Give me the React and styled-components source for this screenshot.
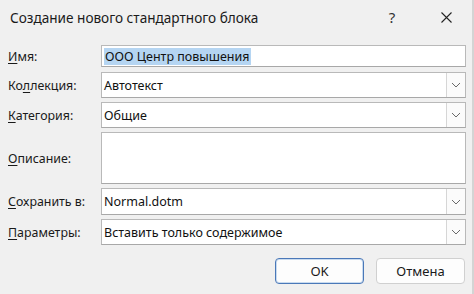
import styled, { createGlobalStyle } from "styled-components";

const GlobalStyle = createGlobalStyle`
  html, body {
    margin: 0;
    padding: 0;
    background: #f0f0f0;
  }
  body {
    font-family: "Noto Sans", "Open Sans", sans-serif;
    color: #1a1a1a;
  }
`;

const Dialog = styled.div`
  width: 472px;
  height: 294px;
  background: #f0f0f0;
  border-right: 2px solid #d4d4d4;
  display: flex;
  flex-direction: column;
  overflow: hidden;
`;

const TitleBar = styled.div`
  height: 34px;
  display: flex;
  align-items: center;
  padding-left: 10px;
  padding-right: 3px;
`;

const Title = styled.div`
  flex: 1;
  font-size: 13.6px;
  color: #1a1a1a;
  white-space: nowrap;
`;

const TitleButton = styled.div`
  width: 46px;
  height: 34px;
  margin-right: ${(p) => p.$mr || 0}px;
  display: flex;
  align-items: center;
  justify-content: center;
  font-size: 15px;
  color: #333;
`;

const Form = styled.div`
  margin-top: 11px;
  padding: 0 6px 0 8px;
  display: flex;
  flex-direction: column;
  gap: 4px;
`;

const Row = styled.div`
  display: grid;
  grid-template-columns: 93px 1fr;
  align-items: center;
  height: ${(p) => p.$h}px;
  margin-top: ${(p) => p.$mt || 0}px;
`;

const Label = styled.div`
  font-size: 12.4px;
  color: #1a1a1a;
  white-space: nowrap;
`;

const Key = styled.span`
  text-decoration: underline;
  text-underline-offset: 2px;
`;

const Field = styled.div`
  height: 100%;
  box-sizing: border-box;
  background: #fff;
  border: 1px solid #b9b9b9;
  border-bottom-color: #a8a8a8;
  display: flex;
  align-items: center;
  font-size: 12.5px;
  color: #111;
`;

const FieldText = styled.div`
  flex: 1;
  padding-left: 2px;
  white-space: nowrap;
  overflow: hidden;
`;

const Selected = styled.span`
  background: #b5d5f2;
  padding: 2px 1px 3px 1px;
`;

const DropButton = styled.div`
  width: 19px;
  height: 100%;
  box-sizing: border-box;
  border-left: 1px solid #d6d6d6;
  background: #fbfbfb;
  display: flex;
  align-items: center;
  justify-content: center;
`;

const Buttons = styled.div`
  display: flex;
  justify-content: flex-end;
  gap: 12px;
  padding: 13px 7px 0 0;
`;

const Button = styled.div`
  width: 89px;
  height: 26px;
  box-sizing: border-box;
  background: #fdfdfd;
  border: 1px solid ${(p) => (p.$primary ? "#4a78b8" : "#d0d0d0")};
  box-shadow: ${(p) => (p.$primary ? "inset 0 0 0 1px #c9dbef" : "none")};
  border-radius: 4px;
  display: flex;
  align-items: center;
  justify-content: center;
  font-size: 13px;
  color: #1a1a1a;
`;

const Chevron = () => (
  <svg width="10" height="6" viewBox="0 0 10 6">
    <polyline points="1,1 5,5 9,1" fill="none" stroke="#6a6a6a" strokeWidth="1" />
  </svg>
);

const CloseIcon = () => (
  <svg width="11" height="11" viewBox="0 0 11 11">
    <path d="M0.5 0.5 L10.5 10.5 M10.5 0.5 L0.5 10.5" stroke="#222" strokeWidth="1.1" />
  </svg>
);

const Select = ({ children }) => (
  <Field>
    <FieldText>{children}</FieldText>
    <DropButton>
      <Chevron />
    </DropButton>
  </Field>
);

export default function App() {
  return (
    <>
      <GlobalStyle />
      <Dialog>
        <TitleBar>
          <Title>Создание нового стандартного блока</Title>
          <TitleButton $mr={8}>?</TitleButton>
          <TitleButton>
            <CloseIcon />
          </TitleButton>
        </TitleBar>
        <Form>
          <Row $h={22}>
            <Label>
              <Key>И</Key>мя:
            </Label>
            <Field>
              <FieldText>
                <Selected>ООО Центр повышения</Selected>
              </FieldText>
            </Field>
          </Row>
          <Row $h={26} $mt={1}>
            <Label>
              Ко<Key>л</Key>лекция:
            </Label>
            <Select>Автотекст</Select>
          </Row>
          <Row $h={26}>
            <Label>
              <Key>К</Key>атегория:
            </Label>
            <Select>Общие</Select>
          </Row>
          <Row $h={52}>
            <Label>
              <Key>О</Key>писание:
            </Label>
            <Field />
          </Row>
          <Row $h={27}>
            <Label>
              <Key>С</Key>охранить в:
            </Label>
            <Select>Normal.dotm</Select>
          </Row>
          <Row $h={26}>
            <Label>
              <Key>П</Key>араметры:
            </Label>
            <Select>Вставить только содержимое</Select>
          </Row>
        </Form>
        <Buttons>
          <Button $primary>OK</Button>
          <Button>Отмена</Button>
        </Buttons>
      </Dialog>
    </>
  );
}
